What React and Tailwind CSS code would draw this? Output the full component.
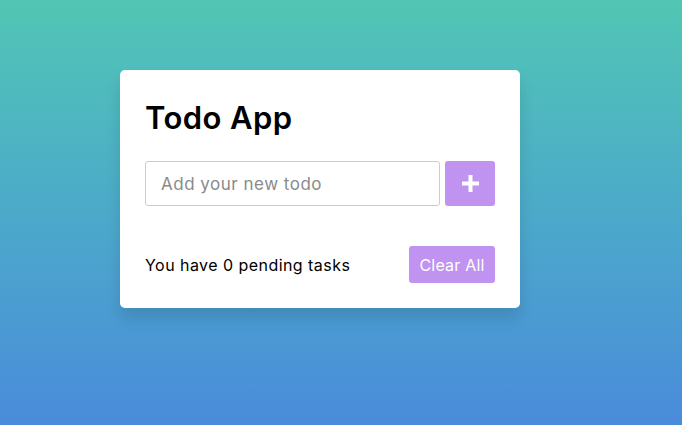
import React, { useState } from 'react';

export default function App() {
  const [text, setText] = useState('');
  const [todos, setTodos] = useState([]);

  const add = () => {
    if (!text.trim()) return;
    setTodos([...todos, text.trim()]);
    setText('');
  };

  return (
    <div className="min-h-screen w-full bg-gradient-to-b from-[#52c6b4] to-[#4a8bdb] pt-[70px] pl-[120px] font-['Inter',sans-serif]">
      <div className="w-[400px] bg-white rounded-[5px] p-[25px] shadow-[0_10px_15px_rgba(0,0,0,0.12)]">
        <h1 className="text-[31px] leading-[45px] font-semibold text-black tracking-[0.4px]">Todo App</h1>

        <div className="flex gap-[5px] mt-[21px]">
          <input
            value={text}
            onChange={e => setText(e.target.value)}
            placeholder="Add your new todo"
            className="flex-1 min-w-0 h-[45px] border border-[#ccc] rounded-[3px] px-[15px] text-[17px] tracking-[0.5px] text-black placeholder:text-[#8a8a8a] outline-none"
          />
          <button
            onClick={add}
            className="shrink-0 w-[50px] h-[45px] rounded-[3px] bg-[#bf93ef] text-white flex items-center justify-center"
          >
            <svg width="19" height="19" viewBox="0 0 19 19">
              <path d="M9.5 1v17M1 9.5h17" stroke="white" strokeWidth="4" />
            </svg>
          </button>
        </div>

        {todos.length > 0 && (
          <ul className="mt-[10px]">
            {todos.map((t, i) => (
              <li key={i} className="bg-[#f2f2f2] rounded-[3px] px-[15px] leading-[45px] mb-[5px] text-[16px]">{t}</li>
            ))}
          </ul>
        )}

        <div className="flex items-center justify-between mt-[40px]">
          <span className="text-[16px] tracking-[0.45px] text-black">You have {todos.length} pending tasks</span>
          <button
            onClick={() => setTodos([])}
            className="shrink-0 w-[86px] h-[37px] rounded-[3px] bg-[#bf93ef] text-white text-[16px] tracking-[0.2px]"
          >
            Clear All
          </button>
        </div>
      </div>
    </div>
  );
}
